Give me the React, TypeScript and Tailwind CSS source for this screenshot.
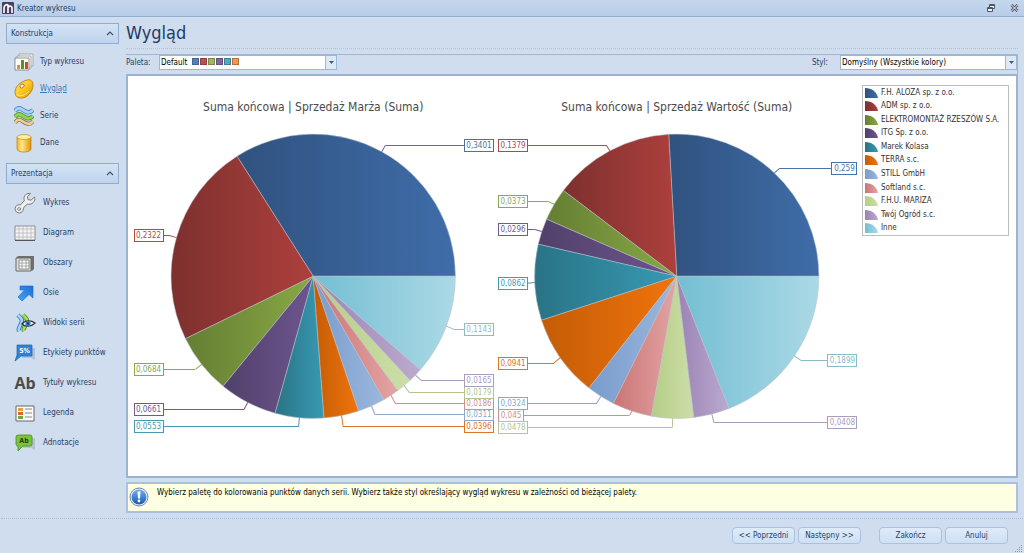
import { useState } from 'react'
import type { ReactNode } from 'react'

const FONT = "font-['DejaVu_Sans_Condensed','DejaVu_Sans','Noto_Sans',sans-serif]"

const series = [
  { name: 'F.H. ALOZA sp. z o.o.', from: '#30527f', to: '#3f6da9', line: '#4a72a8' },
  { name: 'ADM sp. z o.o.', from: '#7d302e', to: '#ad403d', line: '#b04a47' },
  { name: 'ELEKTROMONTAŻ RZESZÓW S.A.', from: '#657e33', to: '#88a945', line: '#8ba653' },
  { name: 'ITG Sp. z o.o.', from: '#51406a', to: '#6d568f', line: '#6f5a91' },
  { name: 'Marek Kolasa', from: '#297385', to: '#389ab4', line: '#4699ae' },
  { name: 'TERRA s.c.', from: '#c45c06', to: '#f0740c', line: '#d9762a' },
  { name: 'STILL GmbH', from: '#789ccc', to: '#9cb7dd', line: '#8ba6c9' },
  { name: 'Softland s.c.', from: '#cb7474', to: '#e3a4a4', line: '#cd8f8f' },
  { name: 'F.H.U. MARIZA', from: '#b5cd86', to: '#ccdea8', line: '#b5c496' },
  { name: 'Twój Ogród s.c.', from: '#9b83b6', to: '#bbaace', line: '#ac9dbf' },
  { name: 'Inne', from: '#74bed3', to: '#abd9e6', line: '#8bbac8' },
]

type Label = { value: number; side: 'l' | 'r'; y: number }

const charts: { title: string; cx: number; left: number; right: number; labels: Label[] }[] = [
  {
    title: 'Suma końcowa | Sprzedaż Marża (Suma)',
    cx: 184,
    left: 5,
    right: 364,
    labels: [
      { value: 0.3401, side: 'r', y: 68 },
      { value: 0.2322, side: 'l', y: 158 },
      { value: 0.0684, side: 'l', y: 292 },
      { value: 0.0661, side: 'l', y: 332 },
      { value: 0.0553, side: 'l', y: 349 },
      { value: 0.0396, side: 'r', y: 349 },
      { value: 0.0311, side: 'r', y: 337 },
      { value: 0.0186, side: 'r', y: 326 },
      { value: 0.0179, side: 'r', y: 315 },
      { value: 0.0165, side: 'r', y: 303 },
      { value: 0.1143, side: 'r', y: 252 },
    ],
  },
  {
    title: 'Suma końcowa | Sprzedaż Wartość (Suma)',
    cx: 547,
    left: 369,
    right: 727,
    labels: [
      { value: 0.259, side: 'r', y: 91 },
      { value: 0.1379, side: 'l', y: 68 },
      { value: 0.0373, side: 'l', y: 124 },
      { value: 0.0296, side: 'l', y: 152 },
      { value: 0.0862, side: 'l', y: 206 },
      { value: 0.0941, side: 'l', y: 286 },
      { value: 0.0324, side: 'l', y: 326 },
      { value: 0.045, side: 'l', y: 338 },
      { value: 0.0478, side: 'l', y: 350 },
      { value: 0.0408, side: 'r', y: 345 },
      { value: 0.1899, side: 'r', y: 283 },
    ],
  },
]

const CY = 199
const R = 142

function point(cx: number, r: number, share: number) {
  const a = share * 2 * Math.PI
  return [cx + r * Math.cos(a), CY - r * Math.sin(a)]
}

function Pie({ chart }: { chart: (typeof charts)[number] }) {
  let total = 0
  const slices = chart.labels.map((label, i) => {
    const start = total
    total += label.value
    return { ...label, start, end: total, mid: start + label.value / 2, style: series[i] }
  })

  return (
    <g>
      <text x={chart.cx} y={34} textAnchor="middle" fontSize={12} fill="#4a4a4a">
        {chart.title}
      </text>
      {slices.map((s, i) => {
        const [x1, y1] = point(chart.cx, R, s.start)
        const [x2, y2] = point(chart.cx, R, s.end)
        return (
          <path
            key={i}
            d={`M${chart.cx} ${CY}L${x1} ${y1}A${R} ${R} 0 0 0 ${x2} ${y2}Z`}
            fill={`url(#slice${i})`}
            stroke="#b9c0c8"
            strokeWidth={0.5}
          />
        )
      })}
      {slices.map((s, i) => {
        const text = String(s.value).replace('.', ',')
        const w = text.length === 6 ? 29 : 25
        const x = s.side === 'l' ? chart.left : chart.right - w
        const edge = s.side === 'l' ? x + w : x
        const [px, py] = point(chart.cx, R, s.mid)
        const [ex] = point(chart.cx, R + 8, s.mid)
        return (
          <g key={i}>
            <path d={`M${px} ${py}L${ex} ${s.y}`} fill="none" stroke={s.style.line} />
            <path d={`M${ex} ${s.y}H${edge}`} stroke={s.style.line} shapeRendering="crispEdges" />
            <rect
              x={x}
              y={s.y - 6}
              width={w}
              height={12}
              fill="#fff"
              stroke={s.style.line}
              shapeRendering="crispEdges"
            />
            <text x={x + w / 2} y={s.y + 3} textAnchor="middle" fontSize={8} fill={s.style.line}>
              {text}
            </text>
          </g>
        )
      })}
    </g>
  )
}

function ChartTypeIcon() {
  return (
    <svg width="20" height="20" viewBox="0 0 20 20">
      <path d="M5 2h14v12H5z" fill="#f4f4f4" stroke="#9a9a9a" strokeWidth=".8" />
      <path d="M3 4h14v12H3z" fill="#f8f8f8" stroke="#9a9a9a" strokeWidth=".8" />
      <path d="M1 6h14v12H1z" fill="#fff" stroke="#777" strokeWidth=".8" />
      <path d="M3 13h3v4H3z" fill="#e0902b" />
      <path d="M7 8h3v9H7z" fill="#4a9a1e" />
      <path d="M11 10h3v7h-3z" fill="#c9501c" />
    </svg>
  )
}

function PaletteIcon() {
  return (
    <svg width="20" height="20" viewBox="0 0 20 20">
      <defs>
        <linearGradient id="gold" x1="0" y1="0" x2="1" y2="1">
          <stop offset="0" stopColor="#ffe56a" />
          <stop offset=".5" stopColor="#fcc81f" />
          <stop offset="1" stopColor="#d48c06" />
        </linearGradient>
      </defs>
      <path
        d="M13 1c3-.8 5.700.5 6 4 .4 5-2.500 10-6.500 12.500C8.500 20 3.500 19.500 1.800 16.500.5 14 1 10.500 2.800 7.500 4.800 4.500 9 2 13 1Z"
        fill="url(#gold)"
        stroke="#b97a0a"
        strokeWidth=".8"
      />
      <ellipse cx="8" cy="7" rx="2.300" ry="1.800" transform="rotate(-30 8 7)" fill="#f2f5f3" stroke="#a8700b" strokeWidth=".8" />
      <path d="M3 15c2 3 8 2 12-3" stroke="#ffe98a" fill="none" />
    </svg>
  )
}

function SeriesIcon() {
  return (
    <svg width="20" height="20" viewBox="0 0 20 20" fill="none">
      <path d="M1 16.500c3-4 5-3 8-1s6 4 10 0" stroke="#8a6a3a" strokeWidth="4" />
      <path d="M1 16.500c3-4 5-3 8-1s6 4 10 0" stroke="#edcf9c" strokeWidth="2.600" />
      <path d="M1 11c3-4 5-3 8-1s6 4 10 0" stroke="#3f8a1c" strokeWidth="4.400" />
      <path d="M1 11c3-4 5-3 8-1s6 4 10 0" stroke="#93d356" strokeWidth="2.800" />
      <path d="M1 5c3-4 5-3 8-1s6 4 10 0" stroke="#3878c5" strokeWidth="4.400" />
      <path d="M1 5c3-4 5-3 8-1s6 4 10 0" stroke="#a6d3fa" strokeWidth="2.800" />
    </svg>
  )
}

function DataIcon() {
  return (
    <svg width="20" height="20" viewBox="0 0 20 20">
      <defs>
        <linearGradient id="drum">
          <stop offset="0" stopColor="#f5b41c" />
          <stop offset=".35" stopColor="#ffe98a" />
          <stop offset="1" stopColor="#dd9108" />
        </linearGradient>
      </defs>
      <path d="M3 4v12c0 4 14 4 14 0V4Z" fill="url(#drum)" stroke="#bc7f12" strokeWidth=".7" />
      <ellipse cx="10" cy="4" rx="7" ry="2.500" fill="#ffeea0" stroke="#c98e1a" strokeWidth=".7" />
    </svg>
  )
}

function WrenchIcon() {
  return (
    <svg width="22" height="22" viewBox="0 0 22 22" strokeLinejoin="round">
      <path
        d="M16.500 1.500c-3.500-.7-6.500 1.500-6.500 5 0 .9.200 1.500.4 2.200L6.500 12.800c-2-.3-4 .4-4.900 2-.9 1.800-.5 4 1 5.200 1.700 1.300 4.300 1.200 5.700-.4 1-1.200 1.300-2.500 1.100-3.800l3.900-3.700c3.500.9 7-1.300 7.500-4.600.1-1 0-1.700-.3-2.500l-3.500 3.200-3-.6-.7-2.800Z"
        fill="#efefef"
        stroke="#777"
      />
      <path d="m4.500 15.500 2.200.6-.4 2-2 .4-1-1.300Z" fill="#cfddee" stroke="#777" strokeWidth=".8" />
    </svg>
  )
}

function GridIcon() {
  return (
    <svg width="22" height="22" viewBox="0 0 22 22">
      <path d="M1 4h20v14H1z" fill="#f3f3f3" stroke="#777" strokeWidth=".8" />
      <path d="M5 4v14M9 4v14M13 4v14M17 4v14M1 7h20M1 11h20M1 15h20" stroke="#b9b9b9" strokeWidth=".8" />
      <path d="M1 18.500h20" stroke="#555" />
    </svg>
  )
}

function PanesIcon() {
  return (
    <svg width="22" height="22" viewBox="0 0 22 22">
      <path d="m2 6 2-2h16v13l-2 2Z" fill="#6f6f6f" />
      <path d="M2 6h15v13H2z" fill="#dcdcdc" stroke="#666" />
      <path d="M5 8h10v9H5z" fill="#fff" stroke="#777" strokeWidth=".8" />
      <path d="M8 8v9M12 8v9M5 11h10M5 14h10" stroke="#888" strokeWidth=".7" />
    </svg>
  )
}

function AxesIcon() {
  return (
    <svg width="22" height="22" viewBox="0 0 22 22">
      <defs>
        <linearGradient id="arrow" x1="1" y1="0" x2="0" y2="1">
          <stop offset="0" stopColor="#1c6fd6" />
          <stop offset="1" stopColor="#42a5f8" />
        </linearGradient>
      </defs>
      <path d="M6 4h13v12l-4-3.500-7 6.500-4-4 6.500-7H6Z" fill="url(#arrow)" stroke="#1f67bd" strokeWidth=".6" />
    </svg>
  )
}

function ViewsIcon() {
  return (
    <svg width="22" height="22" viewBox="0 0 22 22" fill="none">
      <path d="M4 3c4 4 5 5 3 9s-3 5-2 7" stroke="#3878c5" strokeWidth="4.400" />
      <path d="M4 3c4 4 5 5 3 9s-3 5-2 7" stroke="#a6d3fa" strokeWidth="2.600" />
      <path d="M9 3c4 4 5 5 3 9s-3 5-2 7" stroke="#4c941d" strokeWidth="4.400" />
      <path d="M9 3c4 4 5 5 3 9s-3 5-2 7" stroke="#a5dc5c" strokeWidth="2.600" />
      <path d="M8 12c3-4 9-4 13-1-4 4-10 4-13 1Z" fill="#fff" stroke="#333" strokeWidth="1.400" />
      <circle cx="14" cy="11.500" r="2.600" fill="#2f7fce" />
      <circle cx="14" cy="11.500" r="1.100" fill="#12233b" />
    </svg>
  )
}

function PointLabelsIcon() {
  return (
    <svg width="22" height="22" viewBox="0 0 22 22">
      <path d="M17 6h4v12l-4-2H8v-2h9Z" fill="#b3c2d6" />
      <path d="M3 3h15v11H7l-6 5 2-6Z" fill="#2b83dc" stroke="#1c66b8" strokeWidth=".7" />
      <text x="10.500" y="11" textAnchor="middle" fontSize="7" fontWeight="700" fill="#fff">
        5%
      </text>
    </svg>
  )
}

function TitlesIcon() {
  return <span className="font-['Open_Sans',sans-serif] text-base leading-none font-bold text-[#4b4b4b]">Ab</span>
}

function LegendIcon() {
  return (
    <svg width="22" height="22" viewBox="0 0 22 22">
      <path d="M2 4h18v15H2z" fill="#fbfbfb" stroke="#666" />
      <path d="M4 6h5v3H4z" fill="#e5a03c" />
      <path d="M4 10h5v3H4z" fill="#d56a34" />
      <path d="M4 14h5v3H4z" fill="#6caa3a" />
      <path d="M11 7h7M11 11h7M11 15h7" stroke="#8a8a8a" />
    </svg>
  )
}

function AnnotationsIcon() {
  return (
    <svg width="22" height="22" viewBox="0 0 22 22">
      <path d="M17 6h4v12l-4-2h-8v-2h8Z" fill="#b3c2d6" />
      <path
        d="M4 3h12q2 0 2 2v7q0 2-2 2H9l-5 5v-5q-2 0-2-2V5q0-2 2-2Z"
        fill="#7cc23c"
        stroke="#4d8a20"
        strokeWidth=".8"
      />
      <text x="10" y="11" textAnchor="middle" fontSize="7" fontWeight="700" fill="#24410f">
        Ab
      </text>
    </svg>
  )
}

const buildItems = [
  { name: 'Typ wykresu', icon: ChartTypeIcon },
  { name: 'Wygląd', icon: PaletteIcon },
  { name: 'Serie', icon: SeriesIcon },
  { name: 'Dane', icon: DataIcon },
]

const viewItems = [
  { name: 'Wykres', icon: WrenchIcon },
  { name: 'Diagram', icon: GridIcon },
  { name: 'Obszary', icon: PanesIcon },
  { name: 'Osie', icon: AxesIcon },
  { name: 'Widoki serii', icon: ViewsIcon },
  { name: 'Etykiety punktów', icon: PointLabelsIcon },
  { name: 'Tytuły wykresu', icon: TitlesIcon },
  { name: 'Legenda', icon: LegendIcon },
  { name: 'Adnotacje', icon: AnnotationsIcon },
]

function NavGroup({ title, children }: { title: string; children: ReactNode }) {
  const [open, setOpen] = useState(true)

  return (
    <section>
      <button
        onClick={() => setOpen(!open)}
        className="flex h-[21px] w-full items-center justify-between border border-[#8fadd2] bg-linear-to-b from-[#d3e3f5] to-[#bfd4ed] px-1 text-[#24406b]"
      >
        {title}
        <svg width="8" height="8" viewBox="0 0 8 8" className={open ? '' : 'rotate-180'}>
          <path d="M1 5l3-3 3 3" fill="none" stroke="#3c4f6e" strokeWidth="1.200" />
        </svg>
      </button>
      {open && children}
    </section>
  )
}

function DropArrow() {
  return (
    <span className="pointer-events-none absolute inset-y-0 right-0 flex w-3 items-center justify-center border border-[#9db7d6] bg-[#dce9f7]">
      <svg width="5" height="3" viewBox="0 0 5 3">
        <path d="M0 0h5L2.500 3Z" fill="#44597d" />
      </svg>
    </span>
  )
}

function FooterButton({ children }: { children: ReactNode }) {
  return (
    <button className="h-[17px] w-[63px] rounded-sm border border-[#abc1dd] bg-linear-to-b from-[#deebf9] to-[#cfe0f3] leading-3 whitespace-nowrap text-[#24406b]">
      {children}
    </button>
  )
}

export default function App() {
  const [active, setActive] = useState('Wygląd')

  const linkColor = (name: string) => (name === active ? 'text-[#4277b5] underline' : 'text-[#24406b]')

  return (
    <div className={`flex min-h-screen flex-col bg-[#cfddee] text-[8px] leading-3 text-[#24406b] ${FONT}`}>
      <header className="flex h-[17px] items-center gap-[3px] border-b border-[#91add0] bg-linear-to-b from-[#c5d7ec] to-[#b8cde8] pr-1 pl-[2px]">
        <svg width="12" height="12" viewBox="0 0 12 12">
          <rect width="12" height="12" rx="1" fill="#4a3c63" />
          <path d="M2 11V6c0-3 3-4 4-3v8M6 6c1-3 4-2 4 0v5" fill="none" stroke="#fff" strokeWidth="1.600" />
        </svg>
        <span className="flex-1 pt-px">Kreator wykresu</span>
        <button aria-label="Przywróć" className="mr-[11px]">
          <svg width="10" height="9" viewBox="0 0 10 9" fill="#eef4fb" stroke="#4c5568">
            <path d="M3.500.5h5v4h-5zM3 1.500h6" />
            <path d="M1.500 3.500h5v4h-5zM1 4.500h6" />
          </svg>
        </button>
        <button aria-label="Zamknij" className="mr-px">
          <svg width="9" height="8" viewBox="0 0 9 8">
            <path d="M1.500 1l6 6M7.500 1l-6 6" stroke="#4c5568" strokeWidth="2.600" />
            <path d="M1.500 1l6 6M7.500 1l-6 6" stroke="#eef4fb" />
          </svg>
        </button>
      </header>

      <div className="flex flex-1">
        <aside className="w-[126px] shrink-0 pt-[6px] pr-[7px] pl-[6px]">
          <NavGroup title="Konstrukcja">
            <nav className="pt-1 pb-[7px]">
              {buildItems.map((item) => (
                <a
                  key={item.name}
                  href="#"
                  onClick={() => setActive(item.name)}
                  className={`flex h-[27px] items-center gap-[6px] pl-2 ${linkColor(item.name)}`}
                >
                  <item.icon />
                  {item.name}
                </a>
              ))}
            </nav>
          </NavGroup>
          <NavGroup title="Prezentacja">
            <nav className="pt-1">
              {viewItems.map((item) => (
                <a
                  key={item.name}
                  href="#"
                  onClick={() => setActive(item.name)}
                  className={`flex h-[30px] items-center gap-[7px] pl-2 whitespace-nowrap ${linkColor(item.name)}`}
                >
                  <span className="flex w-[22px] justify-center">
                    <item.icon />
                  </span>
                  {item.name}
                </a>
              ))}
            </nav>
          </NavGroup>
        </aside>

        <main className="flex min-w-0 flex-1 flex-col pr-[6px]">
          <h1 className="h-8 border-b border-dotted border-[#b3c5de] pt-1 text-lg leading-6 text-[#1f3a66]">Wygląd</h1>

          <div className="mt-[5px] flex h-5 items-start border-t border-r border-[#9db7d6]">
            <label htmlFor="palette" className="w-[33px] shrink-0 pt-[2px]">
              Paleta:
            </label>
            <div className="relative w-[178px]">
              <select
                id="palette"
                className="block h-[15px] w-full appearance-none border border-[#9db7d6] bg-white px-px leading-3 text-black"
              >
                <option>Default</option>
              </select>
              <span className="pointer-events-none absolute top-[3px] left-[33px] flex gap-px">
                <i className="size-[7px] border border-[#44668f] bg-[#4f81bd]" />
                <i className="size-[7px] border border-[#8f4442] bg-[#c0504d]" />
                <i className="size-[7px] border border-[#758a4c] bg-[#9bbb59]" />
                <i className="size-[7px] border border-[#64527c] bg-[#8064a2]" />
                <i className="size-[7px] border border-[#417f90] bg-[#4bacc6]" />
                <i className="size-[7px] border border-[#b07440] bg-[#f79646]" />
              </span>
              <DropArrow />
            </div>
            <label htmlFor="style" className="mr-3 ml-auto pt-[2px]">
              Styl:
            </label>
            <div className="relative w-[177px]">
              <select
                id="style"
                className="block h-[15px] w-full appearance-none border border-[#9db7d6] bg-white px-px leading-3 text-black"
              >
                <option>Domyślny (Wszystkie kolory)</option>
              </select>
              <DropArrow />
            </div>
          </div>

          <div className="flex items-start border-2 border-[#9db3d0] bg-white p-px pr-[7px]">
            <svg viewBox="0 0 730 397" className="min-w-0 flex-1">
              <defs>
                {series.map((s, i) => (
                  <linearGradient key={i} id={`slice${i}`}>
                    <stop offset="0" stopColor={s.from} />
                    <stop offset="1" stopColor={s.to} />
                  </linearGradient>
                ))}
              </defs>
              {charts.map((chart) => (
                <Pie key={chart.title} chart={chart} />
              ))}
            </svg>
            <ul className="mt-2 ml-[2px] grid h-[151px] w-[147px] shrink-0 auto-rows-fr border border-[#bdbdbd] pl-[2px] text-[#333]">
              {series.map((s, i) => (
                <li key={s.name} className="flex items-center gap-[3px] whitespace-nowrap">
                  <svg width="13" height="10" viewBox="0 0 13 10">
                    <path d="M0 0C7 0 12 4 13 10H0Z" fill={`url(#slice${i})`} />
                  </svg>
                  {s.name}
                </li>
              ))}
            </ul>
          </div>

          <div className="mt-1 flex h-[31px] items-start gap-2 border-2 border-[#a9c0de] bg-[#ffffe1] pt-[3px] pl-px text-black">
            <svg width="20" height="20" viewBox="0 0 20 20">
              <defs>
                <linearGradient id="info" x1="0" y1="0" x2="0" y2="1">
                  <stop offset="0" stopColor="#6fb0f0" />
                  <stop offset="1" stopColor="#1759b5" />
                </linearGradient>
              </defs>
              <circle cx="10" cy="10" r="9" fill="#e9f1fa" stroke="#7189a8" />
              <circle cx="10" cy="10" r="7.500" fill="url(#info)" />
              <path d="M8.500 4.500h3l-.5 7H9Z" fill="#fff" />
              <circle cx="10" cy="14" r="1.400" fill="#fff" />
            </svg>
            <p>
              Wybierz paletę do kolorowania punktów danych serii. Wybierz także styl określający wygląd wykresu w
              zależności od bieżącej palety.
            </p>
          </div>
        </main>
      </div>

      <footer className="relative mx-px mt-1 flex h-[35px] justify-end gap-[3px] border-t border-dotted border-[#a9bddb] pt-2 pr-[15px]">
        <FooterButton>&lt;&lt; Poprzedni</FooterButton>
        <FooterButton>Następny &gt;&gt;</FooterButton>
        <span className="w-3" />
        <FooterButton>Zakończ</FooterButton>
        <FooterButton>Anuluj</FooterButton>
        <svg width="9" height="9" viewBox="0 0 9 9" fill="#7f9cc4" className="absolute right-0 bottom-0">
          <path d="M7 1h1v1H7zM5 3h1v1H5zM7 3h1v1H7zM3 5h1v1H3zM5 5h1v1H5zM7 5h1v1H7zM1 7h1v1H1zM3 7h1v1H3zM5 7h1v1H5zM7 7h1v1H7z" />
        </svg>
      </footer>
    </div>
  )
}
